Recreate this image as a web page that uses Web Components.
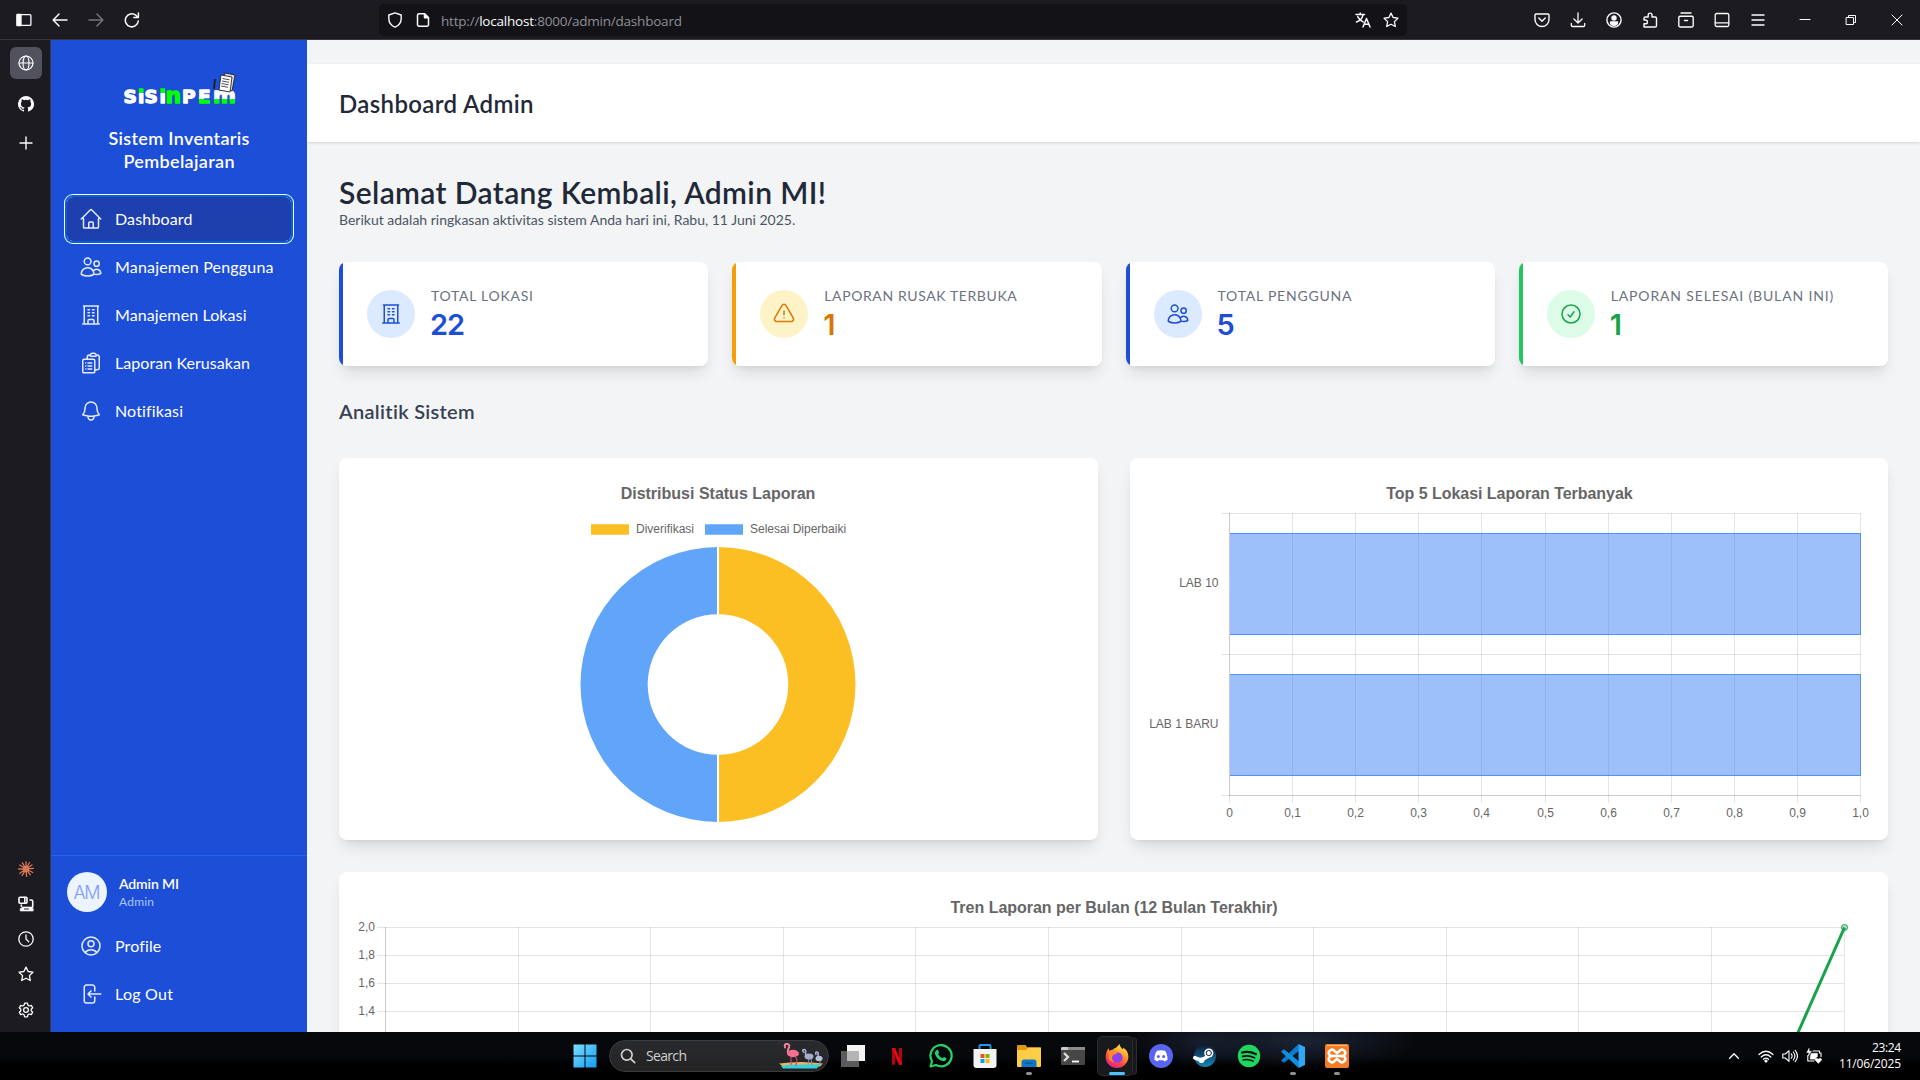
<!DOCTYPE html>
<html lang="id">
<head>
<meta charset="utf-8">
<title>Dashboard Admin</title>
<style>
html,body{margin:0;padding:0;height:100%;overflow:hidden;background:#1c1b22}
body{font-family:Lato,"Open Sans",sans-serif}
</style>
</head>
<body>
<desktop-screen></desktop-screen>
<script>
const STROKE = 'fill="none" stroke="currentColor" stroke-linecap="round" stroke-linejoin="round"';
const outline = d => `<svg viewBox="0 0 24 24" ${STROKE} stroke-width="1.5"><path d="${d}"/></svg>`;
const small = (body, sw = 1.3) => `<svg viewBox="0 0 16 16" ${STROKE} stroke-width="${sw}">${body}</svg>`;
const ICONS = {
  home: outline('m2.25 12 8.954-8.955c.44-.439 1.152-.439 1.591 0L21.75 12M4.5 9.75v10.125c0 .621.504 1.125 1.125 1.125H9.75v-4.875c0-.621.504-1.125 1.125-1.125h2.25c.621 0 1.125.504 1.125 1.125V21h4.125c.621 0 1.125-.504 1.125-1.125V9.75M8.25 21h8.25'),
  users: outline('M15 19.128a9.38 9.38 0 0 0 2.625.372 9.337 9.337 0 0 0 4.121-.952 4.125 4.125 0 0 0-7.533-2.493M15 19.128v-.003c0-1.113-.285-2.16-.786-3.07M15 19.128v.106A12.318 12.318 0 0 1 8.624 21c-2.331 0-4.512-.645-6.374-1.766l-.001-.109a6.375 6.375 0 0 1 11.964-3.07M12 6.375a3.375 3.375 0 1 1-6.75 0 3.375 3.375 0 0 1 6.75 0Zm8.25 2.25a2.625 2.625 0 1 1-5.25 0 2.625 2.625 0 0 1 5.25 0Z'),
  building: outline('M3.75 21h16.5M4.5 3h15M5.25 3v18m13.5-18v18M9 6.75h1.5m-1.5 3h1.5m-1.5 3h1.5m3-6H15m-1.5 3H15m-1.5 3H15M9 21v-3.375c0-.621.504-1.125 1.125-1.125h3.75c.621 0 1.125.504 1.125 1.125V21'),
  clipboard: outline('M9 12h3.75M9 15h3.75M9 18h3.75m3 .75H18a2.25 2.25 0 0 0 2.25-2.25V6.108c0-1.135-.845-2.098-1.976-2.192a48.424 48.424 0 0 0-1.123-.08m-5.801 0c-.065.21-.1.433-.1.664 0 .414.336.75.75.75h4.5a.75.75 0 0 0 .75-.75 2.25 2.25 0 0 0-.1-.664m-5.8 0A2.251 2.251 0 0 1 13.5 2.25H15c1.012 0 1.867.668 2.15 1.586m-5.8 0c-.376.023-.75.05-1.124.08C9.095 4.01 8.25 4.973 8.25 6.108V8.25m0 0H4.875c-.621 0-1.125.504-1.125 1.125v11.25c0 .621.504 1.125 1.125 1.125h9.75c.621 0 1.125-.504 1.125-1.125V9.375c0-.621-.504-1.125-1.125-1.125H8.25ZM6.75 12h.008v.008H6.75V12Zm0 3h.008v.008H6.75V15Zm0 3h.008v.008H6.75V18Z'),
  bell: outline('M14.857 17.082a23.848 23.848 0 0 0 5.454-1.31A8.967 8.967 0 0 1 18 9.75V9A6 6 0 0 0 6 9v.75a8.967 8.967 0 0 1-2.312 6.022c1.733.64 3.56 1.085 5.455 1.31m5.714 0a24.255 24.255 0 0 1-5.714 0m5.714 0a3 3 0 1 1-5.714 0'),
  user: outline('M17.982 18.725A7.488 7.488 0 0 0 12 15.75a7.488 7.488 0 0 0-5.982 2.975m11.963 0a9 9 0 1 0-11.963 0m11.963 0A8.966 8.966 0 0 1 12 21a8.966 8.966 0 0 1-5.982-2.275M15 9.75a3 3 0 1 1-6 0 3 3 0 0 1 6 0Z'),
  logout: outline('M15.75 9V5.25A2.25 2.25 0 0 0 13.5 3h-6a2.25 2.25 0 0 0-2.25 2.25v13.5A2.25 2.25 0 0 0 7.5 21h6a2.25 2.25 0 0 0 2.25-2.25V15M12 9l-3 3m0 0 3 3m-3-3h12.75'),
  warning: outline('M12 9v3.75m-9.303 3.376c-.866 1.5.217 3.374 1.948 3.374h14.71c1.73 0 2.813-1.874 1.948-3.374L13.949 3.378c-.866-1.5-3.032-1.5-3.898 0L2.697 16.126ZM12 15.75h.007v.008H12v-.008Z'),
  check: outline('M9 12.75 11.25 15 15 9.75M21 12a9 9 0 1 1-18 0 9 9 0 0 1 18 0Z'),

  panel: small('<rect x="1.1" y="2.6" width="13.8" height="10.8" rx="1"/><path d="M1 2.5h4v11H1z" fill="currentColor"/>'),
  back: small('<path d="M15 8H1.6M7 2 1.2 8 7 14"/>', 1.5),
  forward: small('<path d="M1 8h13.4M9 2l5.8 6L9 14"/>', 1.5),
  reload: small('<path d="M14.3 9A6.5 6.5 0 1 1 11.8 3.2L14 5.2M14.4 1v4.6H9.8"/>', 1.5),
  shield: small('<path d="M8 .9 14.2 3v3.4c0 4-2.2 7-6.2 8.8C4 13.400 1.800 10.400 1.800 6.400V3z"/>', 1.4),
  page: small('<path d="M9.500 1.800H4a1.500 1.500 0 0 0-1.500 1.500v9.400A1.500 1.500 0 0 0 4 14.200h8a1.500 1.500 0 0 0 1.500-1.500V5.800z"/><path d="M9.500 1.800v4h4z" fill="currentColor"/>', 1.5),
  translate: small('<path d="M1 2.600h8.500M5.200 1v1.600M8 2.800C7.300 6 4.500 9 1.500 10M2.700 4.600C3.800 7 6 9 8.200 10M8 15l3.500-8.500L15 15M9.200 12.300h4.600"/>', 1.5),
  star: small('<path d="m8 1.100 2.100 4.400 4.800.7-3.500 3.400.9 4.900L8 12.200l-4.300 2.300.9-4.900L1.100 6.200l4.800-.7z"/>'),
  pocket: small('<path d="M2 2h12a1 1 0 0 1 1 1v4.500a7 7 0 0 1-14 0V3a1 1 0 0 1 1-1zM4.800 6 8 9.200 11.200 6"/>', 1.4),
  download: small('<path d="M8 .8v10M3.900 7 8 11l4.100-4M1.300 11.500v1.700c0 .8.500 1.300 1.300 1.300h10.800c.8 0 1.300-.5 1.300-1.300v-1.700"/>', 1.3),
  account: small('<circle cx="8" cy="8" r="7.100"/><circle cx="8" cy="6" r="2" fill="currentColor"/><path d="M4.500 10h7c0 2.200-1.500 3.200-3.500 3.200S4.500 12.200 4.500 10z" fill="currentColor"/>', 1.4),
  puzzle: small('<path d="M2 15h11.200c.8 0 1.300-.5 1.300-1.300V6.300c0-.8-.5-1.300-1.300-1.300H10V3a1.900 1.900 0 0 0-3.800 0v2H3.300C2.500 5 2 5.500 2 6.300V8h1.500a1.900 1.900 0 0 1 0 3.800H2z"/>', 1.4),
  archive: small('<path d="M3 1h10M2 4.200h12a1.200 1.200 0 0 1 1.200 1.200v8.400A1.300 1.300 0 0 1 14 15H2a1.300 1.300 0 0 1-1.200-1.200V5.400A1.200 1.200 0 0 1 2 4.200zM6.500 8.500h3"/>', 1.4),
  screen: small('<rect x="1.200" y="1.500" width="13.600" height="13" rx="1.500"/><path d="M1.200 10.800h13.600"/>', 1.3),
  menu: small('<path d="M2 3h12M2 8h12M2 13h12"/>', 1.4),
  min: small('<path d="M3 7.500h10"/>', 1),
  restore: small('<path d="M3.500 5.500h7v7h-7zM5.500 5.500v-2h7v7h-2"/>', 1),
  close: small('<path d="m3 3 10 10M13 3 3 13"/>', 1),

  globe: small('<circle cx="8" cy="8" r="7"/><ellipse cx="8" cy="8" rx="3" ry="7"/><path d="M1 8h14"/>', 1.2),
  github: `<svg viewBox="0 0 16 16" fill="currentColor"><path d="M8 0a8 8 0 0 0-2.530 15.590c.4.070.550-.170.550-.380v-1.490c-2.010.370-2.530-.490-2.690-.940-.090-.230-.480-.940-.820-1.130-.280-.150-.680-.520-.010-.530.630-.010 1.080.580 1.230.820.720 1.210 1.870.870 2.330.660.070-.520.280-.870.510-1.070-1.780-.2-3.640-.890-3.640-3.950 0-.870.310-1.590.820-2.150-.080-.2-.360-1.020.080-2.120 0 0 .670-.210 2.200.820a7.600 7.600 0 0 1 4 0c1.530-1.040 2.200-.820 2.200-.820.440 1.100.160 1.920.080 2.120.510.560.820 1.270.820 2.150 0 3.070-1.870 3.750-3.650 3.950.290.250.540.730.540 1.480v2.200c0 .210.150.460.550.380A8 8 0 0 0 8 0z"/></svg>`,
  plus: small('<path d="M8 2v12M2 8h12"/>', 1.4),
  spark: `<svg viewBox="0 0 16 16" stroke="#d97757" stroke-width="1.3" stroke-linecap="round"><circle cx="8" cy="8" r="2.600" fill="#d97757"/><path d="M8 8V.7M8 8l3.500-6.500M8 8l6-4M8 8l7.300-.6M8 8l6.800 3.500M8 8l4.300 5.800M8 8l.6 7.400M8 8l-3.800 6.400M8 8l-6.200 4.200M8 8H.7M8 8 1.800 4M8 8 4.400 1.800"/></svg>`,
  devices: small('<rect x="1" y="1.200" width="8" height="6" rx="1" stroke-width="1.600"/><path d="M6.800 1.500v5M3.300 9v1.300M12 4h1.500c.7 0 1.200.5 1.200 1.200V11" stroke-width="1.600"/><path d="M4 11h10.500v1.500h.7V15H2.200v-2.500H4z" fill="currentColor" stroke-width=".6"/><path d="M6.500 13h4" stroke="#1c1b22" stroke-width="1"/>', 1.300),
  clock: small('<circle cx="8" cy="8" r="7.200"/><path d="M8 4v4l2.700 2.700"/>', 1.300),
  gear: small('<circle cx="8" cy="8" r="2.400"/><path d="M6.600 1.200h2.800l.5 2 1.400.8 2-.6 1.400 2.400-1.500 1.400v1.600l1.500 1.400-1.400 2.400-2-.6-1.400.8-.5 2H6.600l-.5-2-1.400-.8-2 .6-1.400-2.400 1.500-1.400V7.200L1.300 5.800l1.400-2.400 2 .6 1.400-.8z"/>', 1.300),

  win: `<svg viewBox="0 0 24 24"><defs><linearGradient id="w" x1="0" y1="0" x2="1" y2="1"><stop offset="0" stop-color="#7ce0fd"/><stop offset="1" stop-color="#129bf5"/></linearGradient></defs><path fill="url(#w)" d="M.5.500h11v11h-11zM12.500.500h11v11h-11zM.5 12.500h11v11h-11zM12.500 12.500h11v11h-11z"/></svg>`,
  search: small('<circle cx="6.800" cy="6.800" r="5.300"/><path d="m10.800 10.800 3.900 3.900"/>', 1.700),
  flamingo: `<svg viewBox="0 0 46 25"><path d="M1 20q22-3 44 0l-3 3H5z" fill="#e9b566"/><path d="M3 22.500q6-2 19-1.500 12 0 20-.5l-3 4.500H5z" fill="#35d0d8"/><g fill="none" stroke-linecap="round"><path d="M7 4q-1-4 2.500-3.500 3 .5 1 4.500-1.500 3 0 5" stroke="#f2809b" stroke-width="2"/><path d="M13 12v9M17 12l2 4-1 6" stroke="#d9416e" stroke-width="1.100"/><path d="M26 9q-3-3 .5-3 2 1 1 5M38 11q-1-3 1-2.500 2 1 1 4" stroke="#aab0d0" stroke-width="1.500"/><path d="M31 15l-1 6M33 15l1 6M42 16v5" stroke="#8088b0"/></g><ellipse cx="15" cy="10" rx="6" ry="3.700" fill="#f56f91"/><path d="M6 3 4 6l2-.5z" fill="#222"/><ellipse cx="31" cy="13" rx="4.500" ry="3" fill="#a6accd"/><ellipse cx="41" cy="15" rx="3.500" ry="2.700" fill="#b9bedb"/></svg>`,
  taskview: `<svg viewBox="0 0 24 24"><path fill="#5b5b5b" d="M0 7h18v16H0z"/><path fill="#f4f4f4" d="M6 1h18v16H6z"/><path fill="#b4b4b4" d="M6 7h12v10H6z"/></svg>`,
  netflix: `<svg viewBox="0 0 24 24"><path fill="#b1060f" d="M7 4h3.200v16.600L7 21zM13.800 4H17v17l-3.200-.4z"/><path fill="#e50914" d="M7 4h3.200L17 21l-3.200-.4z"/></svg>`,
  whatsapp: `<svg viewBox="0 0 24 24"><path d="M1.500 22.500 3 17.200A10.600 10.600 0 1 1 7 21z" fill="none" stroke="#25d366" stroke-width="2.200" stroke-linejoin="round"/><path fill="#25d366" d="M7.500 6.200c.8-.7 1.400-.5 1.700.2l.8 1.900c.2.500-.7 1.300-.9 1.700.9 2 2.300 3.300 4.300 4.200.5-.3 1.200-1.400 1.700-1.200l2 .9c.7.400.2 1.700-.3 2.300-1 1-2.700 1-4 .5-3.300-1.200-5.700-3.600-6.800-6.800-.3-1.300.3-2.800 1.500-3.700z"/></svg>`,
  store: `<svg viewBox="0 0 24 24"><path d="M6.500 5V2q0-1 1-1h9q1 0 1 1v3" fill="none" stroke="#1d9bea" stroke-width="1.900"/><path fill="#f3f3f3" d="M.5 5h23v16a3 3 0 0 1-3 3h-17a3 3 0 0 1-3-3z"/><path fill="#f25022" d="M7.500 10h4v4h-4z"/><path fill="#7fba00" d="M12.500 10h4v4h-4z"/><path fill="#00a4ef" d="M7.500 15h4v4h-4z"/><path fill="#ffb900" d="M12.500 15h4v4h-4z"/></svg>`,
  explorer: `<svg viewBox="0 0 24 24"><path fill="#e09a10" d="M0 2q0-1 1-1h7.500l2 2.500H24V8H0z"/><path fill="#fdce45" d="M0 6h9l2-2.500h12q1 0 1 1V22q0 1-1 1H1q-1 0-1-1z"/><path fill="#1076c8" d="M4.500 18q0-2.500 2.500-2.500h10q2.500 0 2.500 2.500v5h-15z"/><path fill="#075a9c" d="M8 18.500h8v1.500H8z"/></svg>`,
  terminal: `<svg viewBox="0 0 24 24"><rect y="3" width="24" height="18" rx="1" fill="#474747"/><path fill="#c9c9c9" d="M1 3h6v3H0V4z"/><path fill="#8b8b8b" d="M7 3h17v3H7z"/><path d="m3 9 4 4-4 4" fill="none" stroke="#ddd" stroke-width="2.300"/><path d="M11 17.500h7" stroke="#fff" stroke-width="1.800"/></svg>`,
  firefox: `<svg viewBox="0 0 24 24"><defs><linearGradient id="f" x1=".8" y1="0" x2=".3" y2="1"><stop offset="0" stop-color="#fff44f"/><stop offset=".35" stop-color="#ffa72b"/><stop offset=".7" stop-color="#ff4a3d"/><stop offset="1" stop-color="#e3208a"/></linearGradient></defs><path fill="url(#f)" d="M14.500 0c.3 2.800 2.200 4 3.500 5.500l.3-1.800C21.500 5.500 23.500 9 23.400 13 23.200 19 18.300 24 12 24S.7 19.200.7 13c0-3.500 1-6.500 3-8.800l.6 2.500L8 5.500c1-1.200 2-1.600 3-1.700 1-.7 2-2.300 3.500-3.800z"/><circle cx="12.300" cy="13.500" r="5.300" fill="#8b3ff0"/><path d="M4 7.500q5-2.500 8.500 1.500l-2.500 1.500q-3 0-3 3.500Q7 17 10 18q-5 .5-6.500-4z" fill="#ff8a2a"/></svg>`,
  discord: `<svg viewBox="0 0 24 24"><circle cx="12" cy="12" r="12" fill="#5865f2"/><path fill="#fff" d="M8 6.800q4-1 8 0c1.600 2.200 2.700 5.500 2.600 8.900q-1.700 1.400-3.500 1.700l-.8-1.400q-2.300.6-4.600 0l-.8 1.400q-1.800-.3-3.500-1.700C5.300 12.300 6.400 9 8 6.800z"/><circle cx="9.400" cy="12.500" r="1.500" fill="#5865f2"/><circle cx="14.600" cy="12.500" r="1.500" fill="#5865f2"/></svg>`,
  steam: `<svg viewBox="0 0 24 24"><defs><linearGradient id="s" x1="0" y1="0" x2="0" y2="1"><stop offset="0" stop-color="#0f1a3a"/><stop offset="1" stop-color="#1387b8"/></linearGradient></defs><circle cx="12" cy="12" r="11" fill="url(#s)"/><path d="M1.800 13.800 8 16.200l4.500-2.400 3.500-2.300" stroke="#fff" stroke-width="3.600" fill="none" stroke-linecap="round"/><circle cx="8.500" cy="16.300" r="2.800" fill="#fff"/><circle cx="15.800" cy="9" r="4.600" fill="#fff"/><circle cx="15.800" cy="9" r="2.600" fill="#fff" stroke="#16244a"/></svg>`,
  spotify: `<svg viewBox="0 0 24 24"><circle cx="12" cy="12" r="11.200" fill="#1ed760"/><g fill="none" stroke="#0a0f0c" stroke-linecap="round"><path d="M5 8.600q7-2 14 1.600" stroke-width="2.100"/><path d="M5.700 12.400q6-1.600 11.800 1.400" stroke-width="1.800"/><path d="M6.200 15.900q5-1.200 10 1.300" stroke-width="1.500"/></g></svg>`,
  vscode: `<svg viewBox="0 0 24 24"><path fill="#0a7ccf" d="m17.500 0 .5 6.800L3 18.700 0 16.500 17 .500z"/><path fill="#0f8ede" d="m0 7.500 3-2.200 15 12-.5 6.700z"/><path fill="#2fa7f4" d="m17.500 0 6.500 3v18l-6.500 3z"/></svg>`,
  xampp: `<svg viewBox="0 0 24 24"><rect width="24" height="24" rx="2" fill="#f57c24"/><path d="M2 1.500h20" stroke="#fbb57f"/><path d="M9.500 12H8A3.200 3.200 0 1 1 9.500 7L12 9l2.500-2A3.200 3.200 0 1 1 16 12a3.200 3.200 0 1 1-1.500 5L12 15l-2.500 2A3.200 3.200 0 1 1 8 12h8" fill="none" stroke="#fff" stroke-width="2.600"/></svg>`,
  up: small('<path d="m3 10.500 5-5 5 5"/>', 1.500),
  wifi: small('<path d="M1 6.500q7-6.500 14 0M3.200 9q4.800-4.500 9.600 0M5.500 11.300q2.500-2.300 5 0"/><circle cx="8" cy="13" r="1" fill="currentColor"/>', 1.200),
  sound: small('<path d="M.8 6v4h2.500L7 13.300V2.700L3.300 6zM9.300 5.800q1.700 2.200 0 4.400M11.300 4q3.200 4 0 8M13.200 2.300q4.500 5.700 0 11.400"/>', 1.100),
  battery: small('<path d="M7 3h6.500v2H15v3.500M1.800 7.500V13H8"/><path d="M5.500 5.300h6v3L8.500 11.200H4.200V8z" fill="currentColor" stroke-width=".4"/><path d="M3 .6.800 4.500h2.400L2.200 8 5.400 3.300H3.200z" fill="currentColor" stroke-width=".5"/><path d="M12.300 15.400 9.200 12.300c-1-2 1.600-2.800 3.100-1.200 1.500-1.600 4.100-.8 3.100 1.200z" fill="currentColor" stroke-width=".3"/>', 1.100)
};

const define = (name, css, html) => customElements.define(name, class extends HTMLElement {
  connectedCallback() {
    if (this.shadowRoot) return;
    const t = document.createElement('template');
    t.innerHTML = `<style>${css}</style>${typeof html === 'function' ? html(this) : html}`;
    this.attachShadow({ mode: 'open' }).append(t.content.cloneNode(true));
  }
});
const fit = (w, text, cls = '') => `<fit-text w="${w}" class="${cls}">${text}</fit-text>`;
const SEMI = 'font-family:"Lato Semibold","Lato SemiBold",Lato,sans-serif;font-weight:600';

define('desktop-screen', `
  :host{display:grid;grid-template-rows:40px 992px 48px;width:1920px;height:1080px;overflow:hidden}
  .mid{display:grid;grid-template-columns:51px 256px 1613px;overflow:hidden}
`, `<browser-bar></browser-bar>
  <div class="mid"><tab-rail></tab-rail><app-sidebar></app-sidebar><app-main></app-main></div>
  <task-bar></task-bar>`);

define('ui-icon', `:host{display:block;flex:none;width:16px;height:16px}svg{display:block;width:100%;height:100%}`,
  el => ICONS[el.getAttribute('name')]);

define('browser-bar', `
  :host{display:flex;align-items:center;height:39px;background:#1c1b22;border-bottom:1px solid #38373e;color:#fbfbfe;font-family:"Open Sans","Noto Sans",sans-serif}
  .nav{display:flex;gap:20px;padding-left:16px;width:363px;box-sizing:border-box}
  .nav ui-icon:nth-child(3){opacity:.4}
  .url{display:flex;align-items:center;width:1028px;height:32px;margin-left:16px;box-sizing:border-box;padding:0 8px;background:#131217;border-radius:5px;font-size:13.500px;color:#fbfbfe}
  .url fit-text{margin-left:10px;padding-top:3px;color:#8f8f98}
  .url b{font-weight:400;color:#fbfbfe}
  .url ui-icon:nth-child(2){margin-left:12px}
  .url ui-icon.t{margin-left:auto;margin-right:12px}
  .tools{display:flex;gap:20px;margin-left:127px}
  .win{display:flex;gap:30px;margin-left:31px}
`, `<div class="nav"><ui-icon name="panel"></ui-icon><ui-icon name="back"></ui-icon><ui-icon name="forward"></ui-icon><ui-icon name="reload"></ui-icon></div>
  <div class="url"><ui-icon name="shield"></ui-icon><ui-icon name="page"></ui-icon>${fit(241, 'http://<b>localhost</b>:8000/admin/dashboard')}<ui-icon class="t" name="translate"></ui-icon><ui-icon name="star"></ui-icon></div>
  <div class="tools">${['pocket', 'download', 'account', 'puzzle', 'archive', 'screen', 'menu'].map(n => `<ui-icon name="${n}"></ui-icon>`).join('')}</div>
  <div class="win"><ui-icon name="min"></ui-icon><ui-icon name="restore"></ui-icon><ui-icon name="close"></ui-icon></div>`);

define('tab-rail', `
  :host{display:flex;flex-direction:column;justify-content:space-between;align-items:center;box-sizing:border-box;padding:7px 0 14px;background:#1c1b22;border-right:1px solid #38373e;color:#fbfbfe}
  .top{display:flex;flex-direction:column;align-items:center;padding-left:2px}
  .tab{display:flex;align-items:center;justify-content:center;width:32px;height:32px;border-radius:6px;background:#52525e;margin-bottom:17px}
  .top>ui-icon:last-child{margin-top:23px}
  .bottom{display:flex;flex-direction:column;gap:19px;padding-left:2px}
  .bottom ui-icon:last-child{margin-top:1px}
`, `<div class="top"><div class="tab"><ui-icon name="globe"></ui-icon></div><ui-icon name="github"></ui-icon><ui-icon name="plus"></ui-icon></div>
  <div class="bottom">${['spark', 'devices', 'clock', 'star', 'gear'].map(n => `<ui-icon name="${n}"></ui-icon>`).join('')}</div>`);

define('brand-logo', `:host{display:block;height:34px}svg{display:block;overflow:visible}`, `
  <svg width="120" height="44" viewBox="0 0 120 44"><defs><linearGradient id="a" x1="0" y1="16" x2="0" y2="32" gradientUnits="userSpaceOnUse"><stop offset=".3" stop-color="#0f0"/><stop offset=".3" stop-color="#fff"/></linearGradient><linearGradient id="b" x1="0" y1="16" x2="0" y2="32" gradientUnits="userSpaceOnUse"><stop offset=".68" stop-color="#fff"/><stop offset=".68" stop-color="#0f0"/></linearGradient></defs>
  <g font-family="DejaVu Sans,sans-serif" font-weight="700" font-size="18.500" stroke="#fff" stroke-width="1.300" stroke-linejoin="round"><text y="31" x="0.500 15 21.500 36.500 42.500 59 75 90"><tspan fill="#fff">S</tspan><tspan fill="url(#a)" stroke="url(#a)">i</tspan><tspan fill="#fff">S</tspan><tspan fill="url(#a)" stroke="url(#a)">i</tspan><tspan fill="#0f0" stroke="#0f0" font-size="22">n</tspan><tspan fill="#fff">P</tspan><tspan fill="url(#b)" stroke="url(#b)">E</tspan><tspan fill="url(#b)" stroke="url(#b)" font-size="22">m</tspan></text></g>
  <g stroke="#222" stroke-width=".9"><path d="m102 1 10 2-3 16-11-3z" fill="#ddd"/><path d="m98 3 11 2-2 15-11-2z" fill="#fff"/><path d="m99.500 6.500 7 1.300M99 9l7 1.300M98.600 11.500l7 1.300M98.200 14l7 1.300" stroke-width=".8"/><path d="m92 7-1 10" stroke-width="2"/></g></svg>`);

define('nav-link', `
  :host{display:flex;align-items:center;gap:12px;height:44px;padding:0 12px;border-radius:6px;color:#fff;font-size:16px}
  :host([active]){background:#1e40af;outline:2px solid #0060df;box-shadow:0 0 0 3px #fff}
  ui-icon{width:24px;height:24px;color:#e3ecff}
  ::slotted(fit-text){padding-bottom:1px}
`, el => `<ui-icon name="${el.getAttribute('icon')}"></ui-icon><slot></slot>`);

define('app-sidebar', `
  :host{display:flex;flex-direction:column;background:#1d4ed8;color:#fff}
  brand-logo{margin:32px auto 0 72px}
  .title{display:flex;flex-direction:column;align-items:center;margin:21px 0 24px;font-size:18px;line-height:23px;${SEMI}}
  nav{display:flex;flex-direction:column;gap:4px;padding:0 16px}
  .foot{margin-top:auto;height:176px;border-top:1px solid #2563eb;display:flex;flex-direction:column}
  .who{display:flex;gap:12px;padding:16px 16px 12px}
  .av{display:flex;align-items:center;justify-content:center;width:40px;height:40px;border-radius:50%;background:#ebf4ff;color:#7f9cf5;font-size:18px;font-family:Inter,sans-serif;font-weight:300}
  .n{display:flex;flex-direction:column;padding-top:2px}
  .n .a{font-size:14px;line-height:19px;${SEMI}}
  .n .b{font-size:12px;line-height:18px;color:#a9c8fb}
`, `<brand-logo></brand-logo><div class="title">${fit(141, 'Sistem Inventaris')}${fit(111, 'Pembelajaran')}</div>
  <nav><nav-link active icon="home">${fit(77.5, 'Dashboard')}</nav-link><nav-link icon="users">${fit(158.5, 'Manajemen Pengguna')}</nav-link><nav-link icon="building">${fit(131.5, 'Manajemen Lokasi')}</nav-link><nav-link icon="clipboard">${fit(135, 'Laporan Kerusakan')}</nav-link><nav-link icon="bell">${fit(68, 'Notifikasi')}</nav-link></nav>
  <div class="foot"><div class="who"><div class="av">${fit(27, 'AM')}</div><div class="n">${fit(60, 'Admin MI', 'a')}${fit(35, 'Admin', 'b')}</div></div>
  <nav><nav-link icon="user">${fit(46, 'Profile')}</nav-link><nav-link icon="logout">${fit(58, 'Log Out')}</nav-link></nav></div>`);

define('stat-card', `
  :host{display:flex;align-items:center;gap:16px;box-sizing:border-box;height:104px;padding:0 24px 0 28px;background:linear-gradient(90deg,var(--edge) 4px,#fff 4px);border-radius:8px;box-shadow:0 10px 15px -3px rgba(0,0,0,.1),0 4px 6px -4px rgba(0,0,0,.1)}
  .ic{display:flex;align-items:center;justify-content:center;width:48px;height:48px;border-radius:50%;background:var(--soft);color:var(--ink)}
  ui-icon{width:24px;height:24px}
  .t{display:flex;flex-direction:column;align-items:flex-start}
  .l{font-size:14px;line-height:20px;color:#6b7280}
  .v{font-size:29px;line-height:38px;height:36px;font-weight:600;font-family:Inter,sans-serif;color:var(--ink);margin-left:-1px}
`, el => { const g = n => el.getAttribute(n); return `<div class="ic"><ui-icon name="${g('icon')}"></ui-icon></div><div class="t">${fit(g('lw'), g('label'), 'l')}${fit(g('vw'), g('value'), 'v')}</div>`; });

define('chart-card', `:host{display:block;box-sizing:border-box;background:#fff;border-radius:8px;box-shadow:0 10px 15px -3px rgba(0,0,0,.1),0 4px 6px -4px rgba(0,0,0,.1)}`, '<slot></slot>');

const TXT = 'font-family="Liberation Sans,Arial,sans-serif" font-size="12" fill="#666"';
const CSS_CHART = ':host,svg{display:block}.h{font-size:16px;font-weight:700;text-anchor:middle}.e{text-anchor:end}.m{text-anchor:middle}';
define('status-chart', CSS_CHART, `<svg width="759" height="382" viewBox="339 458 759 382" ${TXT}>
  <text class="h" x="718" y="499">Distribusi Status Laporan</text>
  <path d="M591 524.300h38v10.400h-38z" fill="#fbbf24"/><text x="636" y="533">Diverifikasi</text>
  <path d="M705 524.300h38v10.400h-38z" fill="#60a5fa"/><text x="750" y="533">Selesai Diperbaiki</text>
  <path d="M718 547a137.500 137.500 0 0 1 0 275V754.800a70.300 70.300 0 0 0 0-140.600z" fill="#fbbf24"/>
  <path d="M718 547a137.500 137.500 0 0 0 0 275V754.800a70.300 70.300 0 0 1 0-140.600z" fill="#60a5fa"/>
  <path d="M718 546v277" stroke="#fff" stroke-width="2"/></svg>`);

const BX = i => Math.round(1229 + i * 63.1) + .5;
define('location-chart', CSS_CHART, () => {
  let s = '';
  for (let i = 0; i <= 10; i++) s += `<path d="M${BX(i)} 513V803" stroke="#000" stroke-opacity=".1"/><text class="m" x="${BX(i)}" y="817">${i === 0 ? '0' : i === 10 ? '1,0' : '0,' + i}</text>`;
  for (const y of [513.5, 654.5, 795.5]) s += `<path d="M1221 ${y}H1861" stroke="#000" stroke-opacity=".1"/>`;
  s += '<path d="M1229.500 513V796M1229 795.500H1861" stroke="#000" stroke-opacity=".1"/>';
  for (const y of [533, 674]) s += `<path d="M1230 ${y}H1861V${y + 102}H1230z" fill="#3b82f6" fill-opacity=".5"/><path d="M1230 ${y + .5}H1860.500V${y + 101.5}H1230" fill="none" stroke="#3b82f6" stroke-opacity=".75"/>`;
  return `<svg width="758" height="382" viewBox="1130 458 758 382" ${TXT}><text class="h" x="1509.500" y="499" textLength="246.500">Top 5 Lokasi Laporan Terbanyak</text>${s}<text class="e" x="1218.500" y="587">LAB 10</text><text class="e" x="1218.500" y="728">LAB 1 BARU</text></svg>`;
});

define('trend-chart', CSS_CHART, () => {
  let s = '';
  for (let i = 0; i < 12; i++) s += `<path d="M${Math.round(385 + i * 132.6) + .5} 927V1034" stroke="#000" stroke-opacity="${i ? .1 : .2}"/>`;
  ['2,0', '1,8', '1,6', '1,4'].forEach((t, i) => { const y = 927.5 + i * 28; s += `<path d="M377 ${y}H1844" stroke="#000" stroke-opacity=".1"/><text class="e" x="375" y="${y + 3.5}">${t}</text>`; });
  return `<svg width="1549" height="162" viewBox="339 872 1549 162"  ${TXT}><text class="h" x="1114" y="913" textLength="327">Tren Laporan per Bulan (12 Bulan Terakhir)</text>${s}<path d="M1844.500 927.500 1796.500 1036" stroke="#16a34a" stroke-width="3" fill="none"/><circle cx="1844.500" cy="927.500" r="3" fill="#16a34a" fill-opacity=".3" stroke="#16a34a"/></svg>`;
});

define('app-main', `
  :host{display:flex;flex-direction:column;background:#f3f4f6;padding-top:24px;overflow:hidden;height:968px}
  header{display:flex;align-items:center;flex:none;height:78px;padding-left:32px;background:#fff;box-shadow:0 1px 3px rgba(0,0,0,.1),0 1px 2px -1px rgba(0,0,0,.1);font-size:24px;${SEMI};color:#1f2937}
  .body{display:flex;flex-direction:column;padding:32px 32px 0;width:1549px}
  .w{font-size:30px;line-height:36px;${SEMI};color:#1f2937;align-self:flex-start}
  .s{font-size:14px;line-height:20px;color:#4b5563;align-self:flex-start}
  .stats{display:grid;grid-template-columns:repeat(4,1fr);gap:24px;margin-top:32px}
  .a{font-size:20px;line-height:28px;${SEMI};color:#374151;align-self:flex-start;margin:31px 0 33px}
  .row{display:grid;grid-template-columns:759px 758px;gap:32px;height:382px}
  .trend{margin-top:32px;height:400px;flex:none}
`, `<header>${fit(194.5, 'Dashboard Admin')}</header>
  <div class="body">${fit(487, 'Selamat Datang Kembali, Admin MI!', 'w')}${fit(456.5, 'Berikut adalah ringkasan aktivitas sistem Anda hari ini, Rabu, 11 Juni 2025.', 's')}
  <div class="stats">
    <stat-card icon="building" label="TOTAL LOKASI" lw="102" value="22" vw="35" style="--edge:#1d4ed8;--soft:#dbeafe;--ink:#1d4ed8"></stat-card>
    <stat-card icon="warning" label="LAPORAN RUSAK TERBUKA" lw="192.5" value="1" vw="12" style="--edge:#f59e0b;--soft:#fef3c7;--ink:#d97706"></stat-card>
    <stat-card icon="users" label="TOTAL PENGGUNA" lw="134" value="5" vw="17" style="--edge:#1d4ed8;--soft:#dbeafe;--ink:#1d4ed8"></stat-card>
    <stat-card icon="check" label="LAPORAN SELESAI (BULAN INI)" lw="222.5" value="1" vw="12" style="--edge:#22c55e;--soft:#dcfce7;--ink:#16a34a"></stat-card>
  </div>
  ${fit(136, 'Analitik Sistem', 'a')}
  <div class="row"><chart-card><status-chart></status-chart></chart-card><chart-card><location-chart></location-chart></chart-card></div>
  <chart-card class="trend"><trend-chart></trend-chart></chart-card></div>`);

define('task-item', `
  :host{display:flex;flex-direction:column;align-items:center;justify-content:center;position:relative;width:44px;height:48px}
  ui-icon{position:relative;width:24px;height:24px}
  i{position:absolute;top:40px;width:6px;height:3px;border-radius:2px;background:#8e8e8e}
  :host([run=on]) i{width:16px;background:#4cc2ff}
  :host([run=on]) .bg{position:absolute;left:2px;top:4px;width:34px;height:38px;border:1px solid #2b2c30;border-radius:5px;background:#191a1e;box-shadow:4px 0 0 -1px #17181b,5px 0 0 -1px #2b2c30}
`, el => `<div class="bg"></div><ui-icon name="${el.getAttribute('name')}"></ui-icon>${el.hasAttribute('run') ? '<i></i>' : ''}`);

define('task-bar', `
  :host{display:flex;align-items:center;height:48px;background:radial-gradient(120px 30px at 1300px 8px,#1b2435 0,transparent 100%),radial-gradient(70px 26px at 1200px 10px,#151c2a 0,transparent 100%),linear-gradient(#07080c 0,#06080b 50%,#000 70%);color:#fff;font-family:"Open Sans","Noto Sans",sans-serif}
  .start{margin-left:562.5px}
  .search{display:flex;align-items:center;box-sizing:border-box;width:220px;height:32px;margin:0 4px 0 2.500px;padding:0 4px 0 10px;border:1px solid #3a3b3e;border-radius:16px;background:linear-gradient(#2a2b2f,#232323);font-size:14px;color:#cfcfcf}
  .search fit-text{margin-left:10px;margin-right:auto;padding-bottom:1px}
  .search .f{width:46px;height:26px}
  .apps{display:flex;margin-left:-2px}
  .tray{display:flex;align-items:center;margin-left:auto;gap:8px;padding-right:19px}
  .tray .u{width:14px;height:14px;margin-right:9px}
  .time{display:flex;flex-direction:column;align-items:flex-end;font-size:12px;line-height:16px;margin-left:9px}
`, `<task-item class="start" name="win"></task-item>
  <div class="search"><ui-icon name="search"></ui-icon>${fit(41, 'Search')}<ui-icon class="f" name="flamingo"></ui-icon></div>
  <div class="apps"><task-item name="taskview"></task-item><task-item name="netflix"></task-item><task-item name="whatsapp"></task-item><task-item name="store"></task-item><task-item name="explorer" run></task-item><task-item name="terminal"></task-item><task-item name="firefox" run="on"></task-item><task-item name="discord"></task-item><task-item name="steam"></task-item><task-item name="spotify"></task-item><task-item name="vscode" run></task-item><task-item name="xampp" run></task-item></div>
  <div class="tray"><ui-icon class="u" name="up"></ui-icon><ui-icon name="wifi"></ui-icon><ui-icon name="sound"></ui-icon><ui-icon name="battery"></ui-icon><div class="time">${fit(29, '23:24')}${fit(62, '11/06/2025')}</div></div>`);

/* Spreads its text over the width given in w by adjusting the tracking. */
customElements.define('fit-text', class extends HTMLElement {
  connectedCallback() {
    if (this.shadowRoot) return;
    this.attachShadow({ mode: 'open' }).innerHTML = '<style>:host{display:block;white-space:nowrap}span{display:inline-block}</style><span><slot></slot></span>';
    const span = this.shadowRoot.querySelector('span'), n = this.textContent.length;
    if (n < 2) return;
    const gap = (this.getAttribute('w') - span.getBoundingClientRect().width) / (n - 1);
    span.style.letterSpacing = gap + 'px';
    span.style.marginRight = -gap + 'px';
  }
});
</script>
</body>
</html>
